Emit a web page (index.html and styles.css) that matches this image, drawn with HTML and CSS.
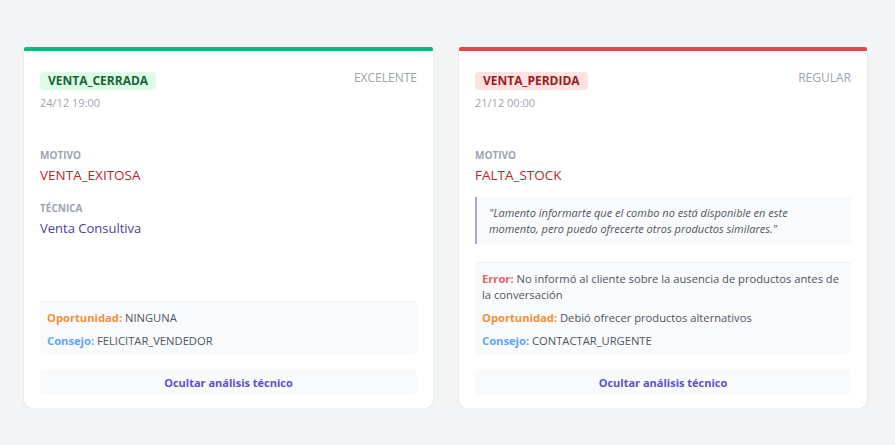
FILE: index.html
```html
<!DOCTYPE html>
<html lang="es">
<head>
<meta charset="utf-8">
<link rel="stylesheet" href="styles.css">
</head>
<body>
<div class="grid">
  <div class="card card-won">
    <div class="head">
      <div>
        <span class="badge badge-won">VENTA_CERRADA</span>
        <div class="date">24/12 19:00</div>
      </div>
      <div class="rating">EXCELENTE</div>
    </div>
    <div class="label">MOTIVO</div>
    <div class="motivo">VENTA_EXITOSA</div>
    <div class="label label-tec">TÉCNICA</div>
    <div class="tecnica">Venta Consultiva</div>
    <div class="details">
      <div class="row"><span class="k k-op">Oportunidad:</span> NINGUNA</div>
      <div class="row"><span class="k k-co">Consejo:</span> FELICITAR_VENDEDOR</div>
    </div>
    <button class="toggle">Ocultar análisis técnico</button>
  </div>
  <div class="card card-lost">
    <div class="head">
      <div>
        <span class="badge badge-lost">VENTA_PERDIDA</span>
        <div class="date">21/12 00:00</div>
      </div>
      <div class="rating">REGULAR</div>
    </div>
    <div class="label">MOTIVO</div>
    <div class="motivo">FALTA_STOCK</div>
    <div class="quote">"Lamento informarte que el combo no está disponible en este momento, pero puedo ofrecerte otros productos similares."</div>
    <div class="details">
      <div class="row"><span class="k k-er">Error:</span> No informó al cliente sobre la ausencia de productos antes de la conversación</div>
      <div class="row"><span class="k k-op">Oportunidad:</span> Debió ofrecer productos alternativos</div>
      <div class="row"><span class="k k-co">Consejo:</span> CONTACTAR_URGENTE</div>
    </div>
    <button class="toggle">Ocultar análisis técnico</button>
  </div>
</div>
</body>
</html>
```
FILE: styles.css
```css
html, body {
  margin: 0;
  padding: 0;
  background: #f3f4f6;
  font-family: "Open Sans", "Noto Sans", sans-serif;
}
.grid {
  display: grid;
  grid-template-columns: 409px 408px;
  column-gap: 26px;
  padding: 47px 24px 0 24px;
}
.card {
  background: #ffffff;
  border-top: 4px solid #10b981;
  border-radius: 2px 2px 8px 8px;
  box-shadow: 0 1px 3px rgba(0,0,0,0.06), 0 1px 2px rgba(0,0,0,0.04);
  padding: 17px 16px 13px 16px;
  height: 361px;
  box-sizing: border-box;
  display: flex;
  flex-direction: column;
}
.card-lost { border-top-color: #e04848; }
.head {
  display: flex;
  justify-content: space-between;
  align-items: flex-start;
}
.badge {
  display: inline-block;
  font-size: 12px;
  font-weight: 700;
  line-height: 18px;
  padding: 0 8px;
  border-radius: 4px;
}
.badge-won { background: #dcfce7; color: #166534; }
.badge-lost { background: #fee2e2; color: #991b1b; }
.date {
  font-size: 11px;
  color: #9ca3af;
  margin-top: 5px;
  line-height: 16px;
}
.rating {
  font-size: 12px;
  color: #9ca3af;
  line-height: 16px;
  margin-top: 2px;
}
.label {
  font-size: 10px;
  font-weight: 700;
  color: #9ca3af;
  margin-top: 38px;
  line-height: 13px;
}
.label-tec { margin-top: 18px; }
.motivo {
  font-size: 13.5px;
  color: #c4222a;
  line-height: 18px;
  margin-top: 4px;
}
.tecnica {
  font-size: 13px;
  color: #4c3d9e;
  line-height: 18px;
  margin-top: 4px;
}
.quote {
  margin-top: 13px;
  background: #f9fafb;
  border-left: 2px solid #a5a8d8;
  padding: 8px 12px 7px 12px;
  font-size: 11px;
  font-style: italic;
  color: #4b5563;
  line-height: 16px;
}
.details {
  margin-top: auto;
  background: #f9fafb;
  border-top: 1px solid #eef0f3;
  border-radius: 0 0 6px 6px;
  padding: 8px 7px 6px 7px;
  font-size: 11.2px;
  color: #4b5563;
  line-height: 16px;
}
.row { margin-bottom: 7px; }
.row:last-child { margin-bottom: 0; }
.k { font-weight: 700; }
.k-op { color: #f0913c; }
.k-co { color: #60a5fa; }
.k-er { color: #e5646a; }
.toggle {
  margin-top: 14px;
  width: 100%;
  height: 26px;
  border: none;
  border-radius: 4px;
  background: #f9fafb;
  color: #5b4fcf;
  font-family: inherit;
  font-size: 11px;
  font-weight: 700;
  cursor: pointer;
}
```
